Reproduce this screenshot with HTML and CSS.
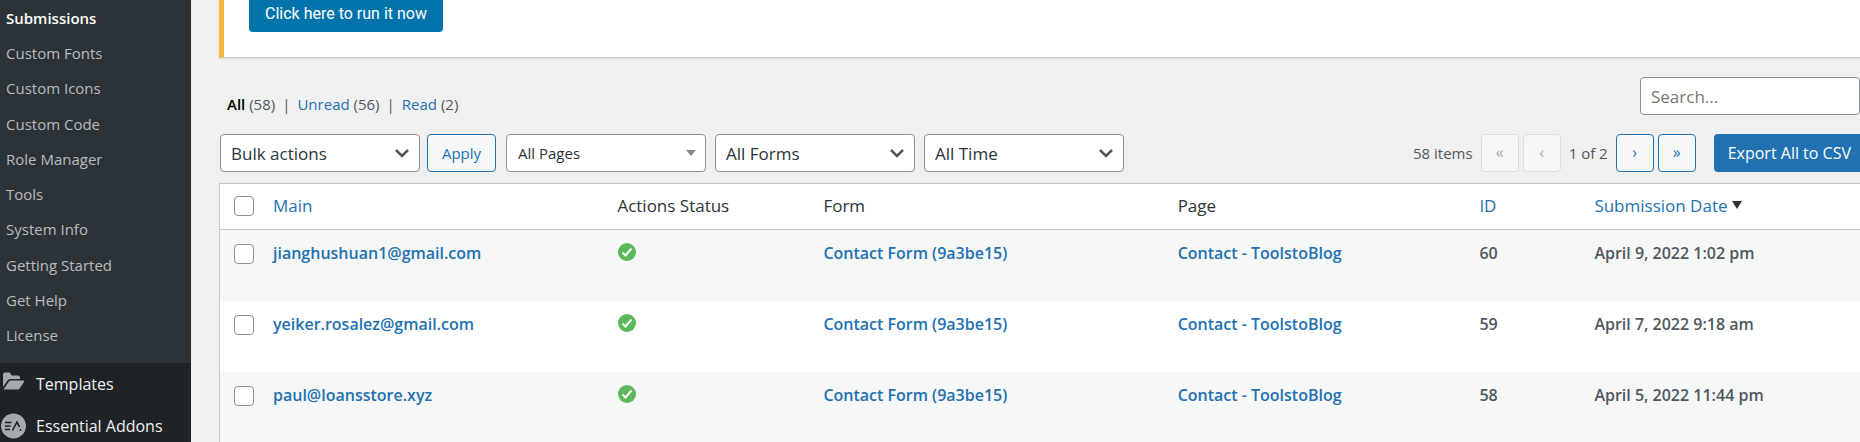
FILE: index.html
```html
<!DOCTYPE html>
<html lang="en">
<head>
  <meta charset="UTF-8" />
  <meta name="viewport" content="width=device-width, initial-scale=1.0" />
  <title>Submissions</title>
  <link rel="stylesheet" href="styles.css">
</head>
<body>
  <nav class="sidebar">
    <ul class="submenu">
      <li><a class="current" href="#">Submissions</a></li>
      <li><a href="#">Custom Fonts</a></li>
      <li><a href="#">Custom Icons</a></li>
      <li><a href="#">Custom Code</a></li>
      <li><a href="#">Role Manager</a></li>
      <li><a href="#">Tools</a></li>
      <li><a href="#">System Info</a></li>
      <li><a href="#">Getting Started</a></li>
      <li><a href="#">Get Help</a></li>
      <li><a href="#">License</a></li>
    </ul>
    <a class="menu-item" href="#">
      <svg class="menu-icon" viewBox="0 0 26 26" aria-hidden="true">
        <path fill="#a7aaad" d="M3 16V3.500q0-2 2-2h4q1 0 1.500 1l1 2H18q2 0 2 2V8H10q-1.500 0-2.500 1.500z"/>
        <path fill="#a7aaad" d="M3.500 18.500l5-7.500Q9.200 9.500 11 9.500h12.500q1.500 0 .5 1.500l-4 6Q19 18.500 17.500 18.500z"/>
      </svg>
      <span>Templates</span>
    </a>
    <a class="menu-item" href="#">
      <svg class="menu-icon" viewBox="0 0 26 26" aria-hidden="true">
        <circle cx="13.500" cy="13" r="12.500" fill="#a7aaad"/>
        <path fill="none" stroke="#1d2327" stroke-width="1.600" d="M5 9.500h6.500M5 13h5.500M5 16.500h5M12.500 17.500L17 9l2.500 5"/>
        <circle cx="20.500" cy="17" r="1" fill="#1d2327"/>
      </svg>
      <span>Essential Addons</span>
    </a>
  </nav>

  <main class="content">
    <div class="notice">
      <button class="notice-button" type="button">Click here to run it now</button>
    </div>

    <div class="top-row">
      <ul class="views">
        <li><a class="current" href="#">All</a> (58)</li>
        <li><a href="#">Unread</a> (56)</li>
        <li><a href="#">Read</a> (2)</li>
      </ul>
      <input class="search" type="search" placeholder="Search..." aria-label="Search">
    </div>

    <div class="tablenav">
      <div class="actions">
        <select class="bulk" aria-label="Bulk actions"><option>Bulk actions</option></select>
        <button class="button apply" type="button">Apply</button>
        <div class="filters">
          <select class="pages" aria-label="Pages"><option>All Pages</option></select>
          <select aria-label="Forms"><option>All Forms</option></select>
          <select aria-label="Time"><option>All Time</option></select>
        </div>
      </div>
      <div class="pagination">
        <span class="total">58 items</span>
        <button class="button page-button" type="button" aria-label="First page" disabled>«</button>
        <button class="button page-button" type="button" aria-label="Previous page" disabled>‹</button>
        <span class="paging">1 of 2</span>
        <button class="button page-button" type="button" aria-label="Next page">›</button>
        <button class="button page-button" type="button" aria-label="Last page">»</button>
        <button class="export" type="button">Export All to CSV</button>
      </div>
    </div>

    <table class="list">
      <thead>
        <tr>
          <th class="col-check"><input type="checkbox" aria-label="Select all"></th>
          <th class="col-main"><a href="#">Main</a></th>
          <th class="col-status">Actions Status</th>
          <th class="col-form">Form</th>
          <th class="col-page">Page</th>
          <th class="col-id"><a href="#">ID</a></th>
          <th class="col-date"><a href="#">Submission Date <span class="sort"></span></a></th>
        </tr>
      </thead>
      <tbody>
        <tr>
          <td class="col-check"><input type="checkbox" aria-label="Select jianghushuan1@gmail.com"></td>
          <td><a href="#">jianghushuan1@gmail.com</a></td>
          <td><svg class="status" viewBox="0 0 18 18" role="img" aria-label="Success"><circle cx="9" cy="9" r="9" fill="#5cb85c"/><path d="M4.500 9.500l3 3 6-7" fill="none" stroke="#fff" stroke-width="2"/></svg></td>
          <td><a href="#">Contact Form (9a3be15)</a></td>
          <td><a href="#">Contact - ToolstoBlog</a></td>
          <td>60</td>
          <td>April 9, 2022 1:02 pm</td>
        </tr>
        <tr>
          <td class="col-check"><input type="checkbox" aria-label="Select yeiker.rosalez@gmail.com"></td>
          <td><a href="#">yeiker.rosalez@gmail.com</a></td>
          <td><svg class="status" viewBox="0 0 18 18" role="img" aria-label="Success"><circle cx="9" cy="9" r="9" fill="#5cb85c"/><path d="M4.500 9.500l3 3 6-7" fill="none" stroke="#fff" stroke-width="2"/></svg></td>
          <td><a href="#">Contact Form (9a3be15)</a></td>
          <td><a href="#">Contact - ToolstoBlog</a></td>
          <td>59</td>
          <td>April 7, 2022 9:18 am</td>
        </tr>
        <tr>
          <td class="col-check"><input type="checkbox" aria-label="Select paul@loansstore.xyz"></td>
          <td><a href="#">paul@loansstore.xyz</a></td>
          <td><svg class="status" viewBox="0 0 18 18" role="img" aria-label="Success"><circle cx="9" cy="9" r="9" fill="#5cb85c"/><path d="M4.500 9.500l3 3 6-7" fill="none" stroke="#fff" stroke-width="2"/></svg></td>
          <td><a href="#">Contact Form (9a3be15)</a></td>
          <td><a href="#">Contact - ToolstoBlog</a></td>
          <td>58</td>
          <td>April 5, 2022 11:44 pm</td>
        </tr>
      </tbody>
    </table>
  </main>
</body>
</html>
```

FILE: styles.css
```css
* {
  box-sizing: border-box;
}

body {
  margin: 0;
  height: 100vh;
  overflow: hidden;
  display: flex;
  background: #f0f0f1;
  color: #50575e;
  font-family: "Segoe UI", "Open Sans", sans-serif;
  font-size: 15px;
  line-height: 24px;
}

ul {
  list-style: none;
  margin: 0;
  padding: 0;
}

a {
  color: #2271b1;
  text-decoration: none;
}

button,
input,
select {
  font-family: inherit;
  margin: 0;
}

/* sidebar */
.sidebar {
  flex: none;
  width: 191px;
  background: #1d2327;
}

.submenu {
  height: 363px;
  padding-bottom: 10px;
  display: flex;
  flex-direction: column;
  background: #2c3338;
}

.submenu li {
  flex: 1;
  display: flex;
  align-items: center;
  padding-left: 6px;
}

.submenu a {
  color: #b9bcbf;
}

.submenu .current {
  color: #fff;
  font-weight: 600;
}

.menu-item {
  display: flex;
  align-items: center;
  gap: 10px;
  height: 42px;
  color: #f0f0f1;
  font-size: 16px;
}

.menu-icon {
  width: 26px;
  height: 26px;
}

/* content */
.content {
  flex: 1;
  min-width: 0;
  padding-left: 28px;
}

.notice {
  height: 58px;
  padding-left: 25px;
  background: #fff;
  border-left: 5px solid #f4b93c;
  border-bottom: 1px solid #c3c4c7;
  box-shadow: 0 1px 2px rgba(0, 0, 0, 0.08);
}

.notice-button {
  height: 32px;
  padding: 0 16px 5px;
  border: 0;
  border-radius: 0 0 4px 4px;
  background: #0073aa;
  color: #fff;
  font-family: Roboto, sans-serif;
  font-size: 16px;
}

.top-row {
  display: flex;
  justify-content: space-between;
  align-items: flex-start;
  margin-top: 19px;
}

.views {
  display: flex;
  padding: 15px 0 0 8px;
}

.views li + li::before {
  content: "|";
  margin: 0 7px;
}

.views .current {
  color: #000;
  font-weight: 600;
}

.search,
select {
  height: 38px;
  padding: 0 10px;
  border: 1px solid #8c8f94;
  border-radius: 4px;
  background-color: #fff;
  color: #2c3338;
  font-size: 17px;
}

.search {
  width: 220px;
}

.search::placeholder {
  color: #757575;
}

.tablenav {
  display: flex;
  justify-content: space-between;
  margin: 18px 0 11px 1px;
}

.actions,
.filters,
.pagination {
  display: flex;
  align-items: center;
}

.actions {
  gap: 7px;
}

.filters {
  gap: 9px;
  margin-left: 3px;
}

select {
  width: 200px;
  appearance: none;
  background-image: url("data:image/svg+xml,%3Csvg xmlns='http://www.w3.org/2000/svg' width='16' height='10'%3E%3Cpath d='M2 2l6 6 6-6' fill='none' stroke='%2350575e' stroke-width='2.500'/%3E%3C/svg%3E");
  background-repeat: no-repeat;
  background-position: right 9px center;
}

.pages {
  padding-left: 11px;
  font-size: 15px;
  background-image: url("data:image/svg+xml,%3Csvg xmlns='http://www.w3.org/2000/svg' width='10' height='6'%3E%3Cpath d='M0 0h10L5 6z' fill='%23888'/%3E%3C/svg%3E");
}

.button {
  height: 38px;
  border: 1px solid #2271b1;
  border-radius: 4px;
  background: #f6f7f7;
  color: #2271b1;
  font-size: 15px;
}

.button:disabled {
  border-color: #dcdcde;
  color: #a7aaad;
}

.apply {
  width: 69px;
  padding: 0;
}

.pagination {
  gap: 4px;
}

.total {
  margin-right: 4px;
}

.paging {
  margin: 0 4px;
}

.page-button {
  width: 38px;
  padding: 0 0 3px;
  font-size: 16px;
}

/* runs up to the window edge */
.export {
  height: 38px;
  margin-left: 14px;
  padding: 0 9px 0 14px;
  border: 0;
  border-radius: 4px 0 0 4px;
  background: #2271b1;
  color: #fff;
  font-size: 16px;
}

/* submissions table */
.list {
  width: 100%;
  table-layout: fixed;
  border-collapse: separate;
  border-spacing: 0;
  border: 1px solid #c3c4c7;
  border-right: 0;
  background: #fff;
}

.list th {
  height: 46px;
  padding: 0 0 1px 8px;
  border-bottom: 1px solid #c3c4c7;
  color: #2c3338;
  font-size: 17px;
  font-weight: 400;
  text-align: left;
}

.list td {
  height: 71px;
  padding: 11px 0 0 8px;
  font-size: 16px;
  font-weight: 600;
  vertical-align: top;
}

.list tbody tr:nth-child(odd) {
  background: #f6f7f7;
}

.list .col-check {
  width: 45px;
  padding-left: 14px;
}

.list td.col-check {
  padding-top: 14px;
}

.col-main {
  width: 21%;
}

.col-status {
  width: 206px;
}

.col-form {
  width: 21.6%;
}

.col-page {
  width: 18.4%;
}

.col-id {
  width: 115px;
}

.list input {
  display: block;
  appearance: none;
  width: 20px;
  height: 20px;
  border: 1px solid #8c8f94;
  border-radius: 4px;
  background: #fff;
}

.status {
  display: block;
  width: 18px;
  height: 18px;
  margin: 2px 0 0 1px;
}

.sort {
  display: inline-block;
  border: 5px solid transparent;
  border-top: 8px solid #2c3338;
  border-bottom: 0;
  vertical-align: 3px;
}
```
